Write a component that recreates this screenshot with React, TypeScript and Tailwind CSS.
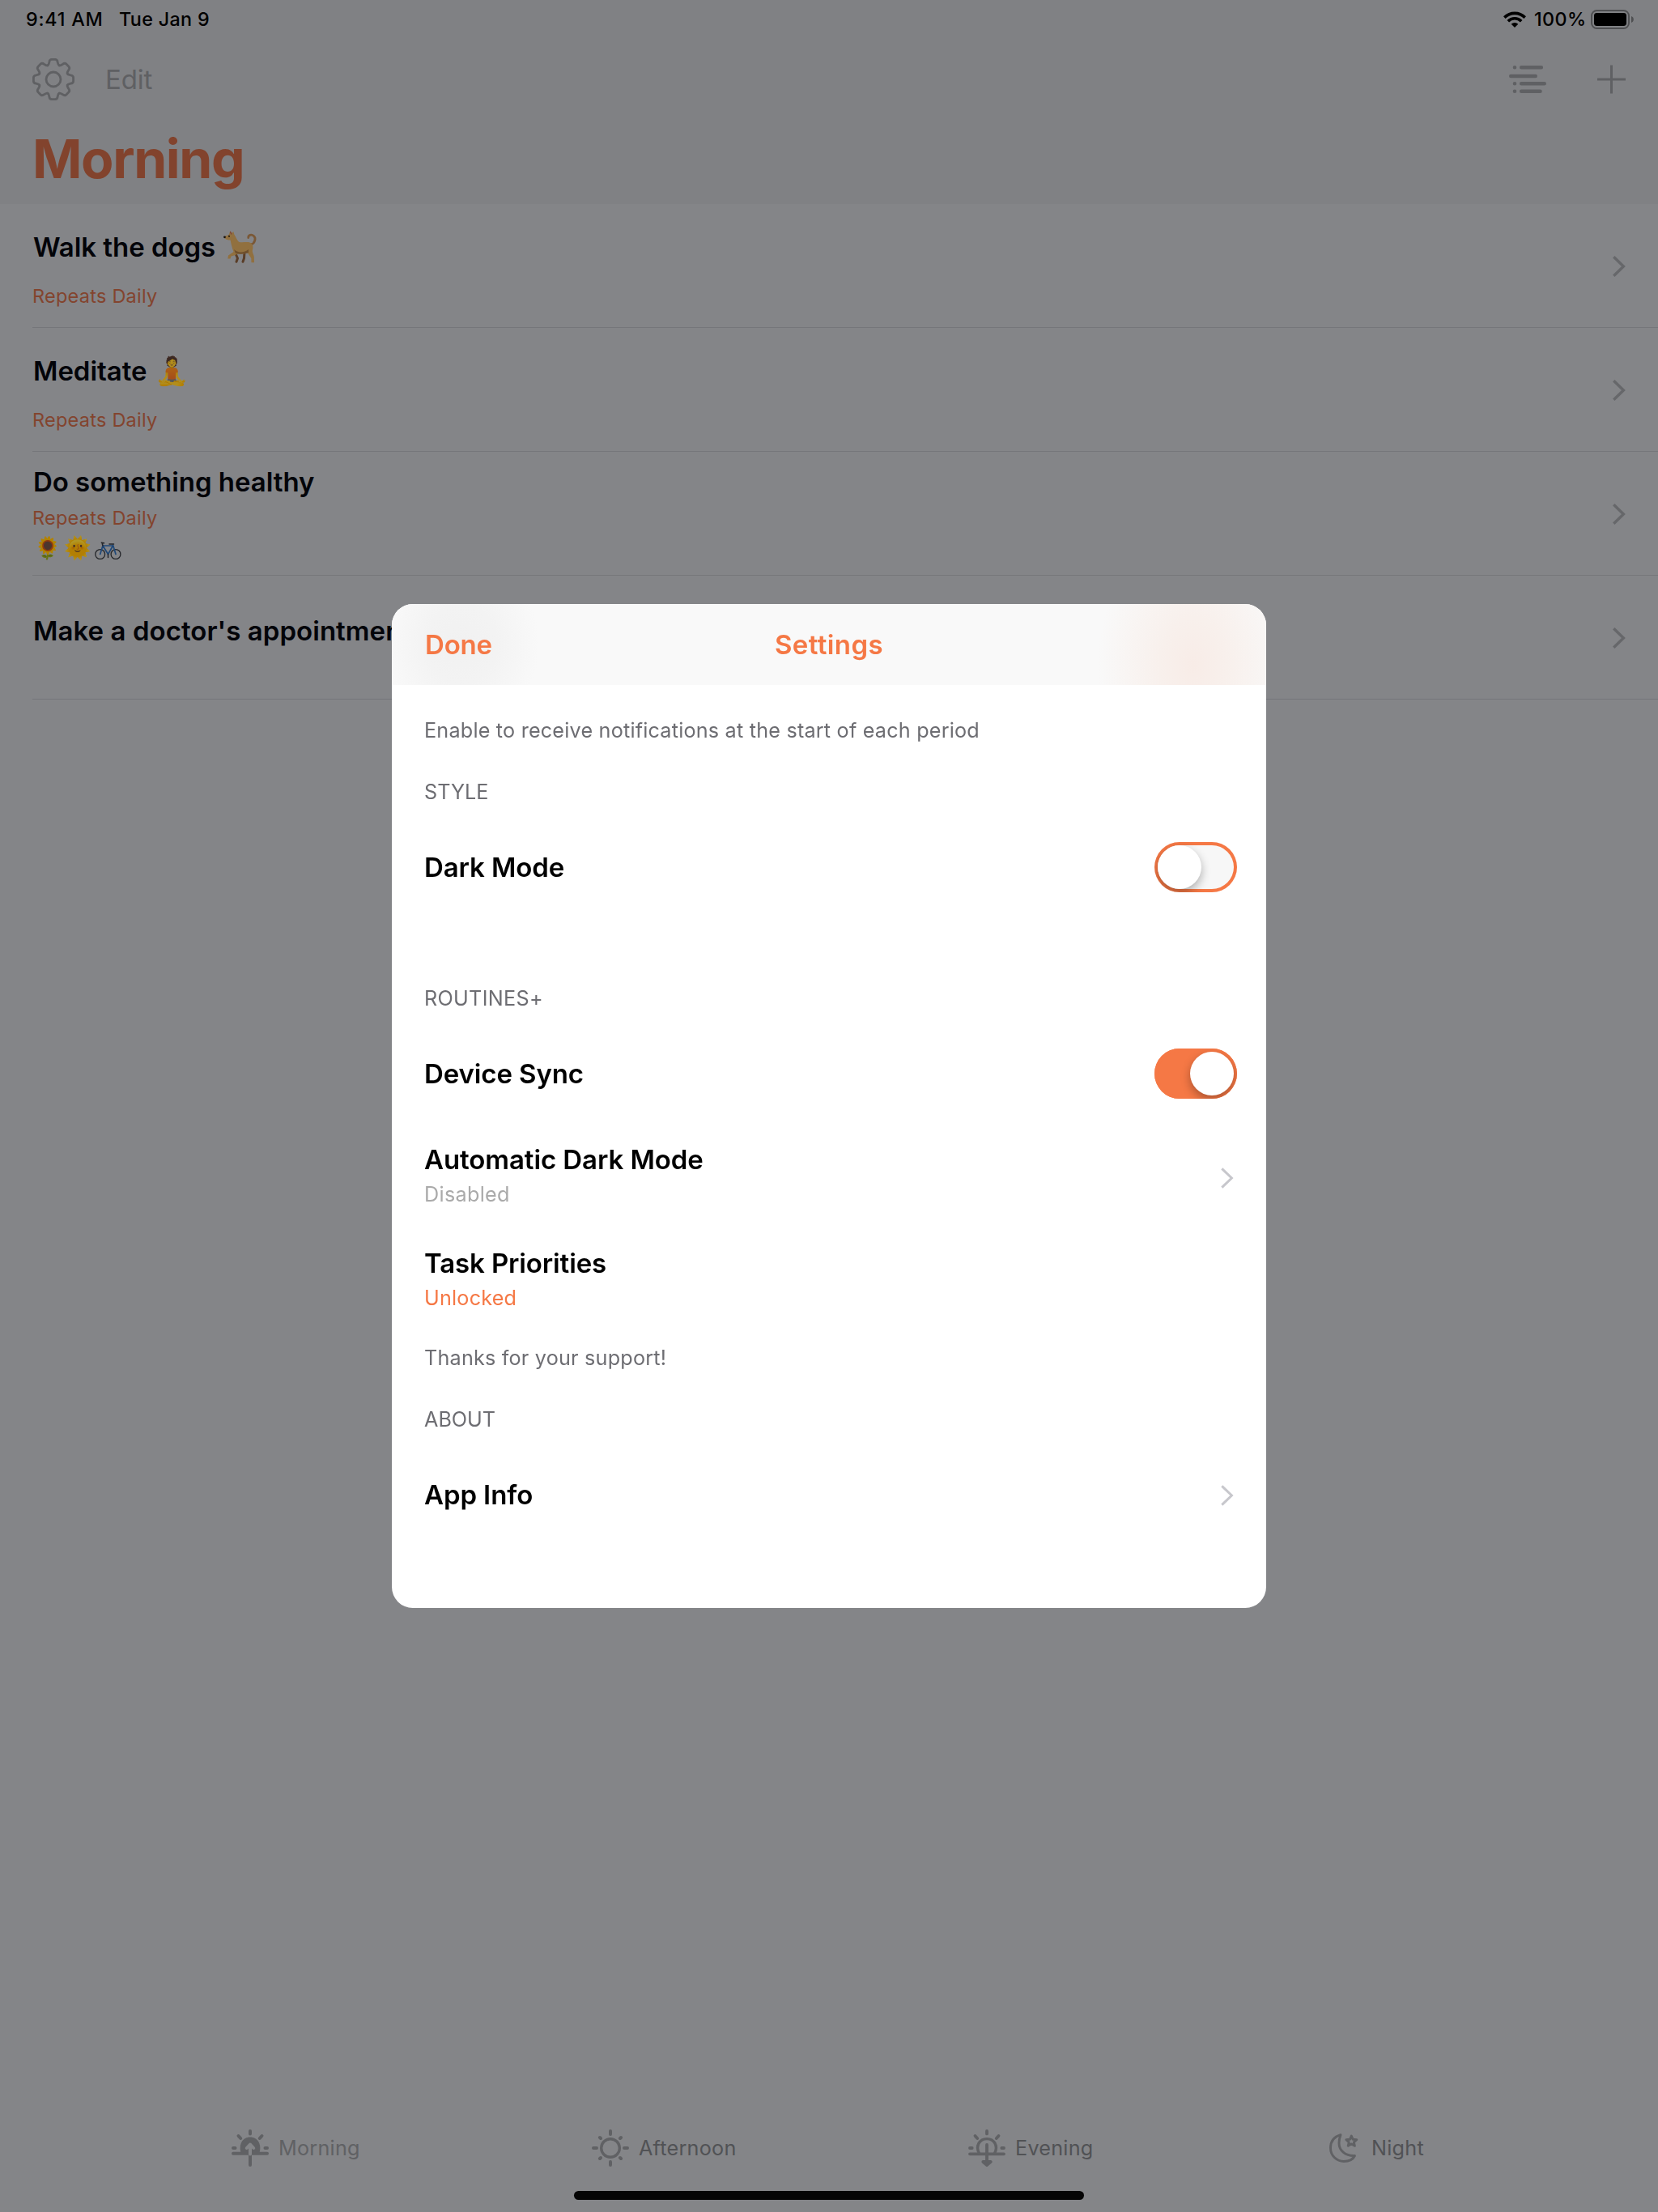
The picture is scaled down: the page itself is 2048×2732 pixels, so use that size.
import React from "react";

const TEETH = [0, 45, 90, 135, 180, 225, 270, 315];

function GearIcon() {
  return (
    <svg width="52" height="52" viewBox="-26 -26 52 52" fill="none" stroke="#5f6063" strokeWidth="2.8" strokeLinecap="round" strokeLinejoin="round">
      {TEETH.map((a) => (
        <path
          key={a}
          transform={`rotate(${a})`}
          d="M-7.1 -17.2 C-5.6 -17.9 -5.5 -19.5 -5.2 -21.2 C-4.9 -23.4 -4 -24.6 -2.2 -24.6 L2.2 -24.6 C4 -24.6 4.9 -23.4 5.2 -21.2 C5.5 -19.5 5.6 -17.9 7.1 -17.2"
        />
      ))}
      <circle r="9" />
    </svg>
  );
}

function ListIcon() {
  return (
    <svg width="46" height="36" viewBox="0 0 46 36" fill="none" stroke="#5f6063" strokeWidth="4.6" strokeLinecap="round">
      <path d="M7 3.3h.01M15.2 3.3h24.6M2.3 14h30.4M7 23.2h.01M15.2 23.2h28.5M7 32.7h.01M15.2 32.7h23.3" />
    </svg>
  );
}

function PlusIcon() {
  return (
    <svg width="36" height="36" viewBox="0 0 36 36" fill="none" stroke="#5f6063" strokeWidth="3">
      <path d="M17.5 .5v35M0 18h35" />
    </svg>
  );
}

function WifiIcon() {
  return (
    <svg width="28" height="20" viewBox="0 0 28 20" fill="none" stroke="#000" strokeWidth="3.6">
      <path d="M1.3 7.6a18 18 0 0 1 25.4 0" />
      <path d="M5.8 12.2a11.6 11.6 0 0 1 16.4 0" />
      <path d="M14 20l-4.3-4.3a6.1 6.1 0 0 1 8.6 0z" fill="#000" stroke="none" />
    </svg>
  );
}

function BatteryIcon() {
  return (
    <svg width="54" height="24" viewBox="0 0 54 24">
      <rect x="1" y="1" width="46" height="22" rx="6.5" fill="none" stroke="#4e4f51" strokeWidth="1.9" />
      <rect x="4" y="4" width="40" height="16" rx="3.4" />
      <path d="M50 8c3.8 1.2 3.8 6.8 0 8z" fill="#4e4f51" />
    </svg>
  );
}

function Chevron({ color, width = 3 }: { color: string; width?: number }) {
  return (
    <svg width="16" height="26" viewBox="0 0 16 26" fill="none" stroke={color} strokeWidth={width}>
      <path d="M1.3 1.3L13.4 13L1.3 24.7" />
    </svg>
  );
}

const tabStroke = { stroke: "#606164", fill: "none", strokeLinecap: "round" as const, strokeLinejoin: "round" as const };

function SunriseIcon() {
  return (
    <svg width="46" height="46" viewBox="0 0 46 46" {...tabStroke} strokeWidth="4">
      <path d="M23 2v3.4M8.5 8l2.7 3M37.5 8l-2.7 3M2 23h2.5M41.5 23H44M2 29.8h42M23 32v12" />
      <path d="M11.5 29C8.5 18 14 9.6 23 9.6S37.5 18 34.5 29z" fill="#606164" stroke="none" />
      <path d="M23 30.5V20M18.8 23L23 18.5L27.2 23" stroke="#848588" />
    </svg>
  );
}

function SunIcon() {
  return (
    <svg width="46" height="46" viewBox="0 0 46 46" {...tabStroke} strokeWidth="4">
      <circle cx="23" cy="23" r="11.3" strokeWidth="3.4" />
      <path d="M23 2v4M23 40v4M2 23h4M40 23h4M10 10l1 1M36 10l-1 1M10 36l1-1M36 36l-1-1" />
    </svg>
  );
}

function SunsetIcon() {
  return (
    <svg width="46" height="46" viewBox="0 0 46 46" {...tabStroke} strokeWidth="3.8">
      <path d="M23 2v3.4M8.5 8l2.7 3M37.5 8l-2.7 3M2 23h2.7M41.3 23H44M2 30.3h42M23 19v24" />
      <path d="M13.5 29.5C8.5 20.5 14 11.6 23 11.6S37.5 20.5 32.5 29.5" strokeWidth="3.4" />
      <path d="M18.3 40L23 44L27.7 40z" fill="#606164" />
    </svg>
  );
}

function MoonIcon() {
  return (
    <svg width="36" height="36" viewBox="0 0 36 36" {...tabStroke} strokeWidth="2.9">
      <path d="M14 1.7C6 4 1.5 10 1.5 18C1.5 27.5 9 34.5 18 34.5C24.5 34.5 29.5 31.5 31.5 27.5C20 28.2 12 21 12 12C12 8 12.7 5 14 1.7z" />
      <path d="M27.3 3L29.2 7.3L33.8 7.7L30.3 10.8L31.4 15.3L27.3 12.9L23.2 15.3L24.3 10.8L20.8 7.7L25.4 7.3z" />
    </svg>
  );
}

function Dog() {
  return (
    <svg width="42" height="42" viewBox="0 0 42 42" strokeLinecap="round" strokeLinejoin="round">
      <path d="M26 27L25.5 35L24 39.3M14.500 28L17.500 35L16 39.300" fill="none" stroke="#5a3d27" strokeWidth="3" />
      <path d="M33.500 18C39 17 40.500 10 37.500 7.500C34.500 5 30.500 6.500 30.800 9.500" fill="none" stroke="#7a5836" strokeWidth="2.800" />
      <path
        d="M.6 8.600C3 7.300 5 7 7 5.500L8.200 1.200L10.600 3.800L12.300 2L13.300 5.500C15.500 9 16.500 12 19 14.800C23 16 28 14.500 32 15.300C36.500 17 37 21 36 24.500C35.200 28 37.500 30 37.800 33L38 40.300H34.500L34.300 35L30 28.500C26 29.500 22 30 18.500 29.500C15 30.500 12 32 9.500 32.500L8.500 35.500H5.300L6 31.500L12.500 27C10.500 22 9.500 17 8.600 12.500C5.500 12.600 2.500 12.500 .6 8.600z"
        fill="#91703f"
      />
      <path d="M13 24C18 29 26 28 31 24L31 28C26 30 20 30 15 29z" fill="#6e4f2d" />
      <circle cx="1.500" cy="8.800" r="1.400" fill="#17120f" />
      <circle cx="7" cy="7.800" r="1" fill="#17120f" />
      <path d="M8.600 2.500l1.200 2.500" stroke="#7d4038" strokeWidth="1.300" />
    </svg>
  );
}

function Bike() {
  return (
    <svg width="33" height="23" viewBox="0 0 33 23" fill="none" strokeLinecap="round" strokeLinejoin="round">
      <circle cx="6.700" cy="15.500" r="5.900" stroke="#24262a" strokeWidth="1.300" />
      <circle cx="26" cy="15.500" r="5.900" stroke="#24262a" strokeWidth="1.300" />
      <path d="M6.700 15.500L10 5H22.500L16.500 15.500L10 5M22.500 4L26 15.500M22.500 5L16.500 15.500" stroke="#1f4878" strokeWidth="1.700" />
      <path d="M8.300 1.200L11.500 1.800M9 1.500L10 5M18 3H23.500M16.500 15.500v4" stroke="#24262a" strokeWidth="1.500" />
    </svg>
  );
}

function Row({ children }: { children: React.ReactNode }) {
  return (
    <div className="ml-10 flex h-[153px] items-center justify-between border-b border-[#75767a] pr-10">
      <div className="flex h-full flex-col">{children}</div>
      <span className="pt-[2px]">
        <Chevron color="#66676a" width={3.4} />
      </span>
    </div>
  );
}

function RowTitle({ children }: { children: React.ReactNode }) {
  return (
    <div className="flex h-10 items-center pl-px text-[33px] leading-10 font-semibold tracking-[-0.04px] text-[#030409]">
      {children}
    </div>
  );
}

function Repeats() {
  return <div className="text-[23.5px] leading-[30px] tracking-[0.24px] text-[#83442e]">Repeats Daily</div>;
}

function Switch({ on }: { on: boolean }) {
  return (
    <div
      className={`flex h-[62px] w-[102px] overflow-hidden rounded-full p-1 shadow-[inset_0_0_0_4px_#f57845] ${
        on ? "justify-end bg-[#f57845]" : "justify-start bg-[#f7f7f7]"
      }`}
    >
      <div className="size-[54px] rounded-full bg-white shadow-[0_5px_12px_rgba(0,0,0,0.3)]" />
    </div>
  );
}

function Section({ children }: { children: React.ReactNode }) {
  return <div className="flex h-[92px] items-center pt-[2px] text-[25.2px] text-[#6d6d72]">{children}</div>;
}

function Note({ children }: { children: React.ReactNode }) {
  return <div className="flex h-[60px] items-center pt-[2px] text-[25.2px] tracking-[0.2px] text-[#6d6d72]">{children}</div>;
}

function Setting({ label, children }: { label: string; children: React.ReactNode }) {
  return (
    <div className="flex h-[94px] items-center justify-between text-[33px] font-semibold tracking-[-0.1px] text-black">
      <span className="pt-px">{label}</span>
      {children}
    </div>
  );
}

function SettingsModal() {
  return (
    <div className="h-[1240px] w-[1080px] overflow-hidden rounded-[26px] bg-white">
      <div className="grid h-[100px] grid-cols-3 items-center bg-[#f9f9f9] bg-[radial-gradient(ellipse_96px_110px_at_86px_50px,#f1f1f1_0%,#f3f3f3_45%,transparent_100%),radial-gradient(ellipse_118px_170px_at_990px_76px,#f8ece7_0%,#f8f0ec_35%,transparent_100%)] px-10 pt-[2px] text-[33px] font-semibold text-[#f57845]">
        <span className="pl-px tracking-[-0.2px]">Done</span>
        <span className="text-center tracking-[0.4px]">Settings</span>
      </div>
      <div className="pt-[26px] pr-9 pl-10">
        <Note>Enable to receive notifications at the start of each period</Note>
        <Section>STYLE</Section>
        <Setting label="Dark Mode">
          <Switch on={false} />
        </Setting>
        <div className="mt-[69px]">
          <Section>
            <span className="tracking-[0.3px]">ROUTINES+</span>
          </Section>
        </div>
        <Setting label="Device Sync">
          <Switch on />
        </Setting>
        <div className="mt-[18px] flex h-32 items-center justify-between pr-1">
          <div className="flex h-full flex-col pt-[21px]">
            <span className="text-[33px] leading-10 font-semibold tracking-[-0.08px] text-black">Automatic Dark Mode</span>
            <span className="text-[25.2px] leading-[47px] tracking-[0.3px] text-[#aaaaaa]">Disabled</span>
          </div>
          <Chevron color="#c7c7cc" />
        </div>
        <div className="flex h-32 flex-col pt-[21px]">
          <span className="text-[33px] leading-10 font-semibold tracking-[-0.13px] text-black">Task Priorities</span>
          <span className="text-[25.2px] leading-[47px] tracking-[0.2px] text-[#f57845]">Unlocked</span>
        </div>
        <Note>Thanks for your support!</Note>
        <Section>ABOUT</Section>
        <Setting label="App Info">
          <span className="pt-px pr-1">
            <Chevron color="#c7c7cc" />
          </span>
        </Setting>
      </div>
    </div>
  );
}

export default function App() {
  return (
    <div className="flex h-[2732px] w-[2048px] flex-col overflow-hidden bg-[#848588] font-['Inter','Noto_Color_Emoji',sans-serif]">
      <header className="h-[252px] bg-[#808184]">
        <div className="flex h-[48px] items-center justify-between pr-[29px] pl-8 text-[23.3px] font-medium text-black">
          <div className="flex">
            <span className="w-[115px] tracking-[0.8px]">9:41 AM</span>
            <span className="tracking-[0.34px]">Tue Jan 9</span>
          </div>
          <div className="flex items-center">
            <WifiIcon />
            <span className="ml-[10px] w-[70px] tracking-[0.42px]">100%</span>
            <BatteryIcon />
          </div>
        </div>
        <div className="flex h-[99px] items-center pr-[39px] pl-10">
          <GearIcon />
          <span className="ml-[38px] pt-[3px] text-[33px] tracking-[-0.2px] text-[#5f6063]">Edit</span>
          <div className="ml-auto flex items-center gap-[63px]">
            <ListIcon />
            <PlusIcon />
          </div>
        </div>
        <h1 className="flex h-[98px] items-center pl-10 text-[66px] font-bold tracking-[-1.4px] text-[#82432d]">Morning</h1>
      </header>

      <main>
        <Row>
          <div className="pt-[33px]">
            <RowTitle>
              Walk the dogs
              <span className="ml-2.5">
                <Dog />
              </span>
            </RowTitle>
          </div>
          <div className="pt-[26px]">
            <Repeats />
          </div>
        </Row>
        <Row>
          <div className="pt-[33px]">
            <RowTitle>
              Meditate
              <span className="ml-2.5 text-[34px] tracking-normal brightness-[0.7]">🧘</span>
            </RowTitle>
          </div>
          <div className="pt-[26px]">
            <Repeats />
          </div>
        </Row>
        <Row>
          <div className="pt-[17px]">
            <RowTitle>Do something healthy</RowTitle>
          </div>
          <div className="pt-[10px]">
            <Repeats />
          </div>
          <div className="flex h-[44px] items-center pl-[1px] text-[27px]">
            <span className="flex w-[37px] justify-center brightness-[0.7]">🌻</span>
            <span className="flex w-[37px] justify-center brightness-[0.7]">🌞</span>
            <span className="flex w-[37px] justify-center pt-[7px]">
              <Bike />
            </span>
          </div>
        </Row>
        <Row>
          <div className="pt-[48px]">
            <RowTitle>
              <span className="tracking-[0.05px]">Make a doctor's appointment</span>
            </RowTitle>
          </div>
        </Row>
      </main>

      <footer className="mt-auto flex h-[108px] flex-col">
        <nav className="flex h-[58px] items-center pl-[286px] text-[25.2px] tracking-[0.24px] text-[#515255]">
          <div className="flex w-[445px] items-center text-[#606164]">
            <SunriseIcon />
            <span className="ml-3 pt-px">Morning</span>
          </div>
          <div className="flex w-[465px] items-center">
            <SunIcon />
            <span className="ml-3 pt-px">Afternoon</span>
          </div>
          <div className="flex w-[446px] items-center">
            <SunsetIcon />
            <span className="ml-3 pt-px">Evening</span>
          </div>
          <div className="flex items-center">
            <MoonIcon />
            <span className="ml-4 pt-px">Night</span>
          </div>
        </nav>
        <div className="mx-auto mt-6 h-[11px] w-[630px] rounded-full bg-[#050505]" />
      </footer>

      <div className="fixed inset-0 flex items-center justify-center">
        <SettingsModal />
      </div>
    </div>
  );
}
